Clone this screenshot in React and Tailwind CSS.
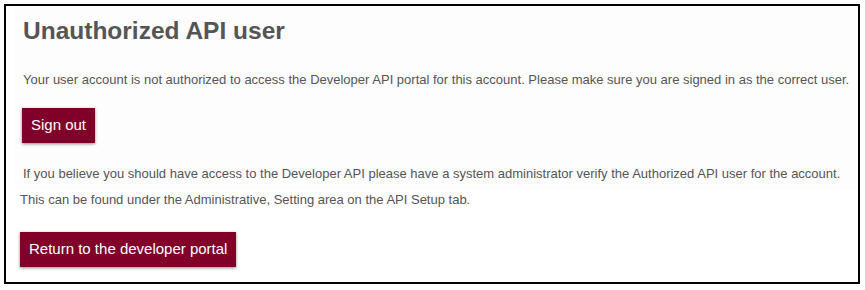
export default function App() {
  return (
    <div className="bg-white w-[865px] h-[290px] pt-[4px] pl-[4px]" style={{ fontFamily: '"Liberation Sans", Arial, sans-serif' }}>
      <div className="w-[856px] h-[280px] border-2 border-black text-[#555555]">
        <div className="ml-[9px] bg-[#fdfdfd] pl-[8px] pt-[9px] pb-[7px]">
          <h1 className="text-[24.5px] font-bold leading-[32px] text-[#555555]">Unauthorized API user</h1>
          <p className="mt-[24px] text-[13px] leading-[18px]">
            Your user account is not authorized to access the Developer API portal for this account. Please make sure you are signed in as the correct user.
          </p>
          <button className="mt-[19px] ml-[-1px] h-[35px] px-[9px] bg-[#80002a] text-white text-[15px] shadow-[0_1px_3px_rgba(0,0,0,0.45)]">
            Sign out
          </button>
          <p className="mt-[22px] text-[13px] leading-[18px]">
            If you believe you should have access to the Developer API please have a system administrator verify the Authorized API user for the account.
          </p>
        </div>
        <p className="ml-[14px] mt-[1px] text-[13px] leading-[18px]">
          This can be found under the Administrative, Setting area on the API Setup tab.
        </p>
        <button className="mt-[23px] ml-[14px] h-[35px] px-[9px] bg-[#80002a] text-white text-[15px] shadow-[0_1px_3px_rgba(0,0,0,0.45)]">
          Return to the developer portal
        </button>
      </div>
    </div>
  );
}
